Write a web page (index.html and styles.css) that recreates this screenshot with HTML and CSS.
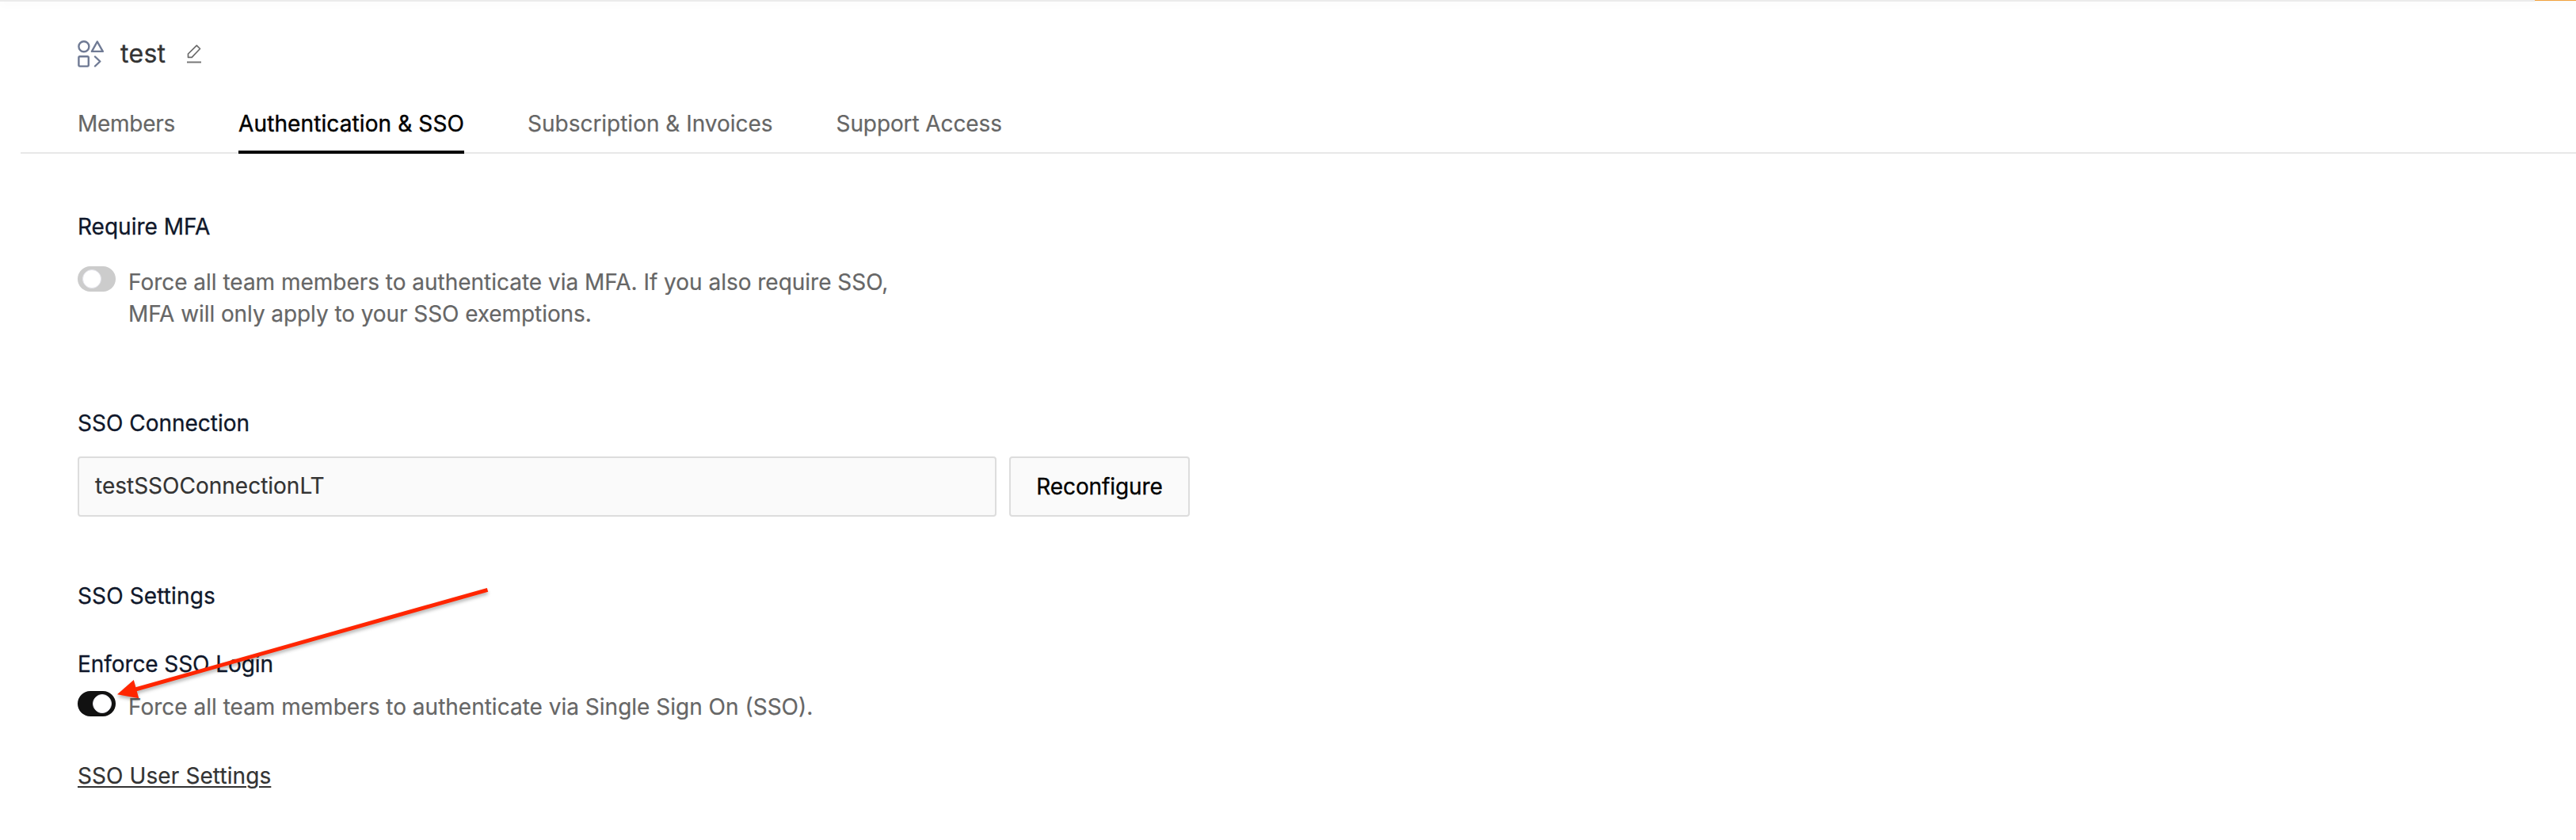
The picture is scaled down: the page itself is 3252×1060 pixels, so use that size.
FILE: index.html
```html
<!DOCTYPE html>
<html lang="en">
<head>
<meta charset="utf-8">
<title>test</title>
<link rel="stylesheet" href="styles.css">
</head>
<body>
<div class="topline"><span class="topline-bar"></span><span class="topline-accent"></span></div>
<header class="team">
  <svg class="team-icon" viewBox="0 0 34 34" width="34" height="34"><g fill="none" stroke="#6f7a94" stroke-width="2.4" stroke-linejoin="round" stroke-linecap="round"><circle cx="7.900" cy="7.700" r="6.500"/><path d="M24.800 1.500L31.800 13.900H17.900Z"/><rect x="1.400" y="20.200" width="12.400" height="12.400" rx="1.500"/><path d="M22 20.500L28.300 26.500L22 32.500"/></g></svg>
  <h1 class="team-name">test</h1>
  <svg class="edit-icon" viewBox="0 0 18 24" width="18" height="24"><path d="M1.500 12L12.300 1.300L16.500 5.500L6.200 16.300H1.500Z" fill="none" stroke="#6b6b6b" stroke-width="1.700" stroke-linejoin="round"/><path d="M0 22.500H18" stroke="#777" stroke-width="2"/></svg>
</header>
<nav class="tabs">
  <a class="tab tab-members">Members</a>
  <a class="tab tab-active">Authentication &amp; SSO</a>
  <a class="tab tab-billing">Subscription &amp; Invoices</a>
  <a class="tab tab-support">Support Access</a>
</nav>
<main class="content">
  <section class="mfa">
    <h2 class="heading">Require MFA</h2>
    <div class="setting"><span class="toggle"></span><p class="desc desc-mfa">Force all team members to authenticate via MFA. If you also require SSO,<br>MFA will only apply to your SSO exemptions.</p></div>
  </section>
  <section class="connection">
    <h2 class="heading">SSO Connection</h2>
    <div class="connection-row"><div class="field">testSSOConnectionLT</div><button class="button">Reconfigure</button></div>
  </section>
  <section class="sso">
    <h2 class="heading sso-title">SSO Settings</h2>
    <h3 class="heading enforce">Enforce SSO Login</h3>
    <div class="setting setting-sso"><span class="toggle toggle-on"></span><p class="desc">Force all team members to authenticate via Single Sign On (SSO).</p></div>
    <a class="link">SSO User Settings</a>
  </section>
</main>
<svg class="arrow" viewBox="0 0 490 170" width="490" height="170"><path d="M475.500 14.300L31 140" stroke="#ff2600" stroke-width="5"/><path d="M8 146.300L28.800 128L35.300 151.300Z" fill="#ff2600"/></svg>
</body>
</html>
```
FILE: styles.css
```css
* { box-sizing: border-box; }
body { margin: 0; background: #fff; color: #333; font: 28px/40px Inter, sans-serif; height: 1060px; overflow: hidden; }
h1, h2, h3, p { margin: 0; font-weight: 400; }
.topline { height: 2px; display: flex; background: #f8f8f8; box-shadow: 0 2px 12px rgba(0, 0, 0, 0.07); }
.topline-bar { flex: 1; background: #ebebeb; }
.topline-accent { width: 52px; height: 1px; background: #f2a33f; }
.team { display: flex; align-items: center; height: 132px; padding-left: 98px; }
.team-icon { flex: none; }
.team-name { font-size: 32px; margin-left: 20px; letter-spacing: 0.3px; width: 58px; -webkit-text-stroke: 0.3px; }
.edit-icon { margin-left: 26px; }
.tabs { display: flex; gap: 80px; height: 60px; margin-left: 26px; padding-left: 72px; border-bottom: 2px solid #e8e8e8; }
.tab { color: #666; height: 60px; padding-top: 2px; white-space: nowrap; -webkit-text-stroke: 0.2px; }
.tab-members { letter-spacing: -0.27px; }
.tab-active { color: #000; letter-spacing: 0.11px; border-bottom: 4px solid #000; -webkit-text-stroke: 0.4px; }
.tab-billing { letter-spacing: -0.02px; }
.tab-support { letter-spacing: -0.1px; }
.content { padding-left: 98px; }
.mfa { padding-top: 72px; height: 320px; }
.heading { color: #0f172a; font-size: 28px; line-height: 40px; -webkit-text-stroke: 0.3px; }
.setting { display: flex; gap: 16px; padding-top: 30px; }
.desc { color: #666; white-space: nowrap; -webkit-text-stroke: 0.2px; }
.desc-mfa { letter-spacing: -0.08px; }
.desc-mfa::first-line { letter-spacing: -0.02px; }
.toggle { flex: none; width: 48px; height: 32px; border-radius: 16px; background: #ccc; padding: 4px 5px 4px 6px; }
.toggle::before { content: ""; display: block; width: 22px; height: 22px; border-radius: 50%; background: #fff; border: 1.5px solid #e5e5ec; }
.toggle-on { background: #111; }
.toggle-on::before { margin-left: auto; }
.connection-row { display: flex; gap: 16px; margin-top: 22px; }
.field { width: 1160px; height: 76px; padding: 15px 20px; border: 2px solid #ddd; border-radius: 4px; background: #fafafa; -webkit-text-stroke: 0.2px; }
.button { width: 228px; height: 76px; border: 2px solid #ddd; border-radius: 4px; background: #fafafa; color: #000; font: 28px Inter, sans-serif; letter-spacing: -0.1px; padding: 0; -webkit-text-stroke: 0.3px; }
.sso { padding-top: 80px; }
.sso-title { letter-spacing: 0.12px; }
.enforce { margin-top: 46px; letter-spacing: -0.08px; }
.setting-sso { padding-top: 14px; }
.link { display: inline-block; margin-top: 47px; letter-spacing: 0.09px; text-decoration: underline; text-decoration-thickness: 2px; text-underline-offset: 3px; -webkit-text-stroke: 0.2px; }
.arrow { position: absolute; left: 140px; top: 730px; filter: drop-shadow(0 3px 2px rgba(0, 0, 0, 0.3)); }
```
